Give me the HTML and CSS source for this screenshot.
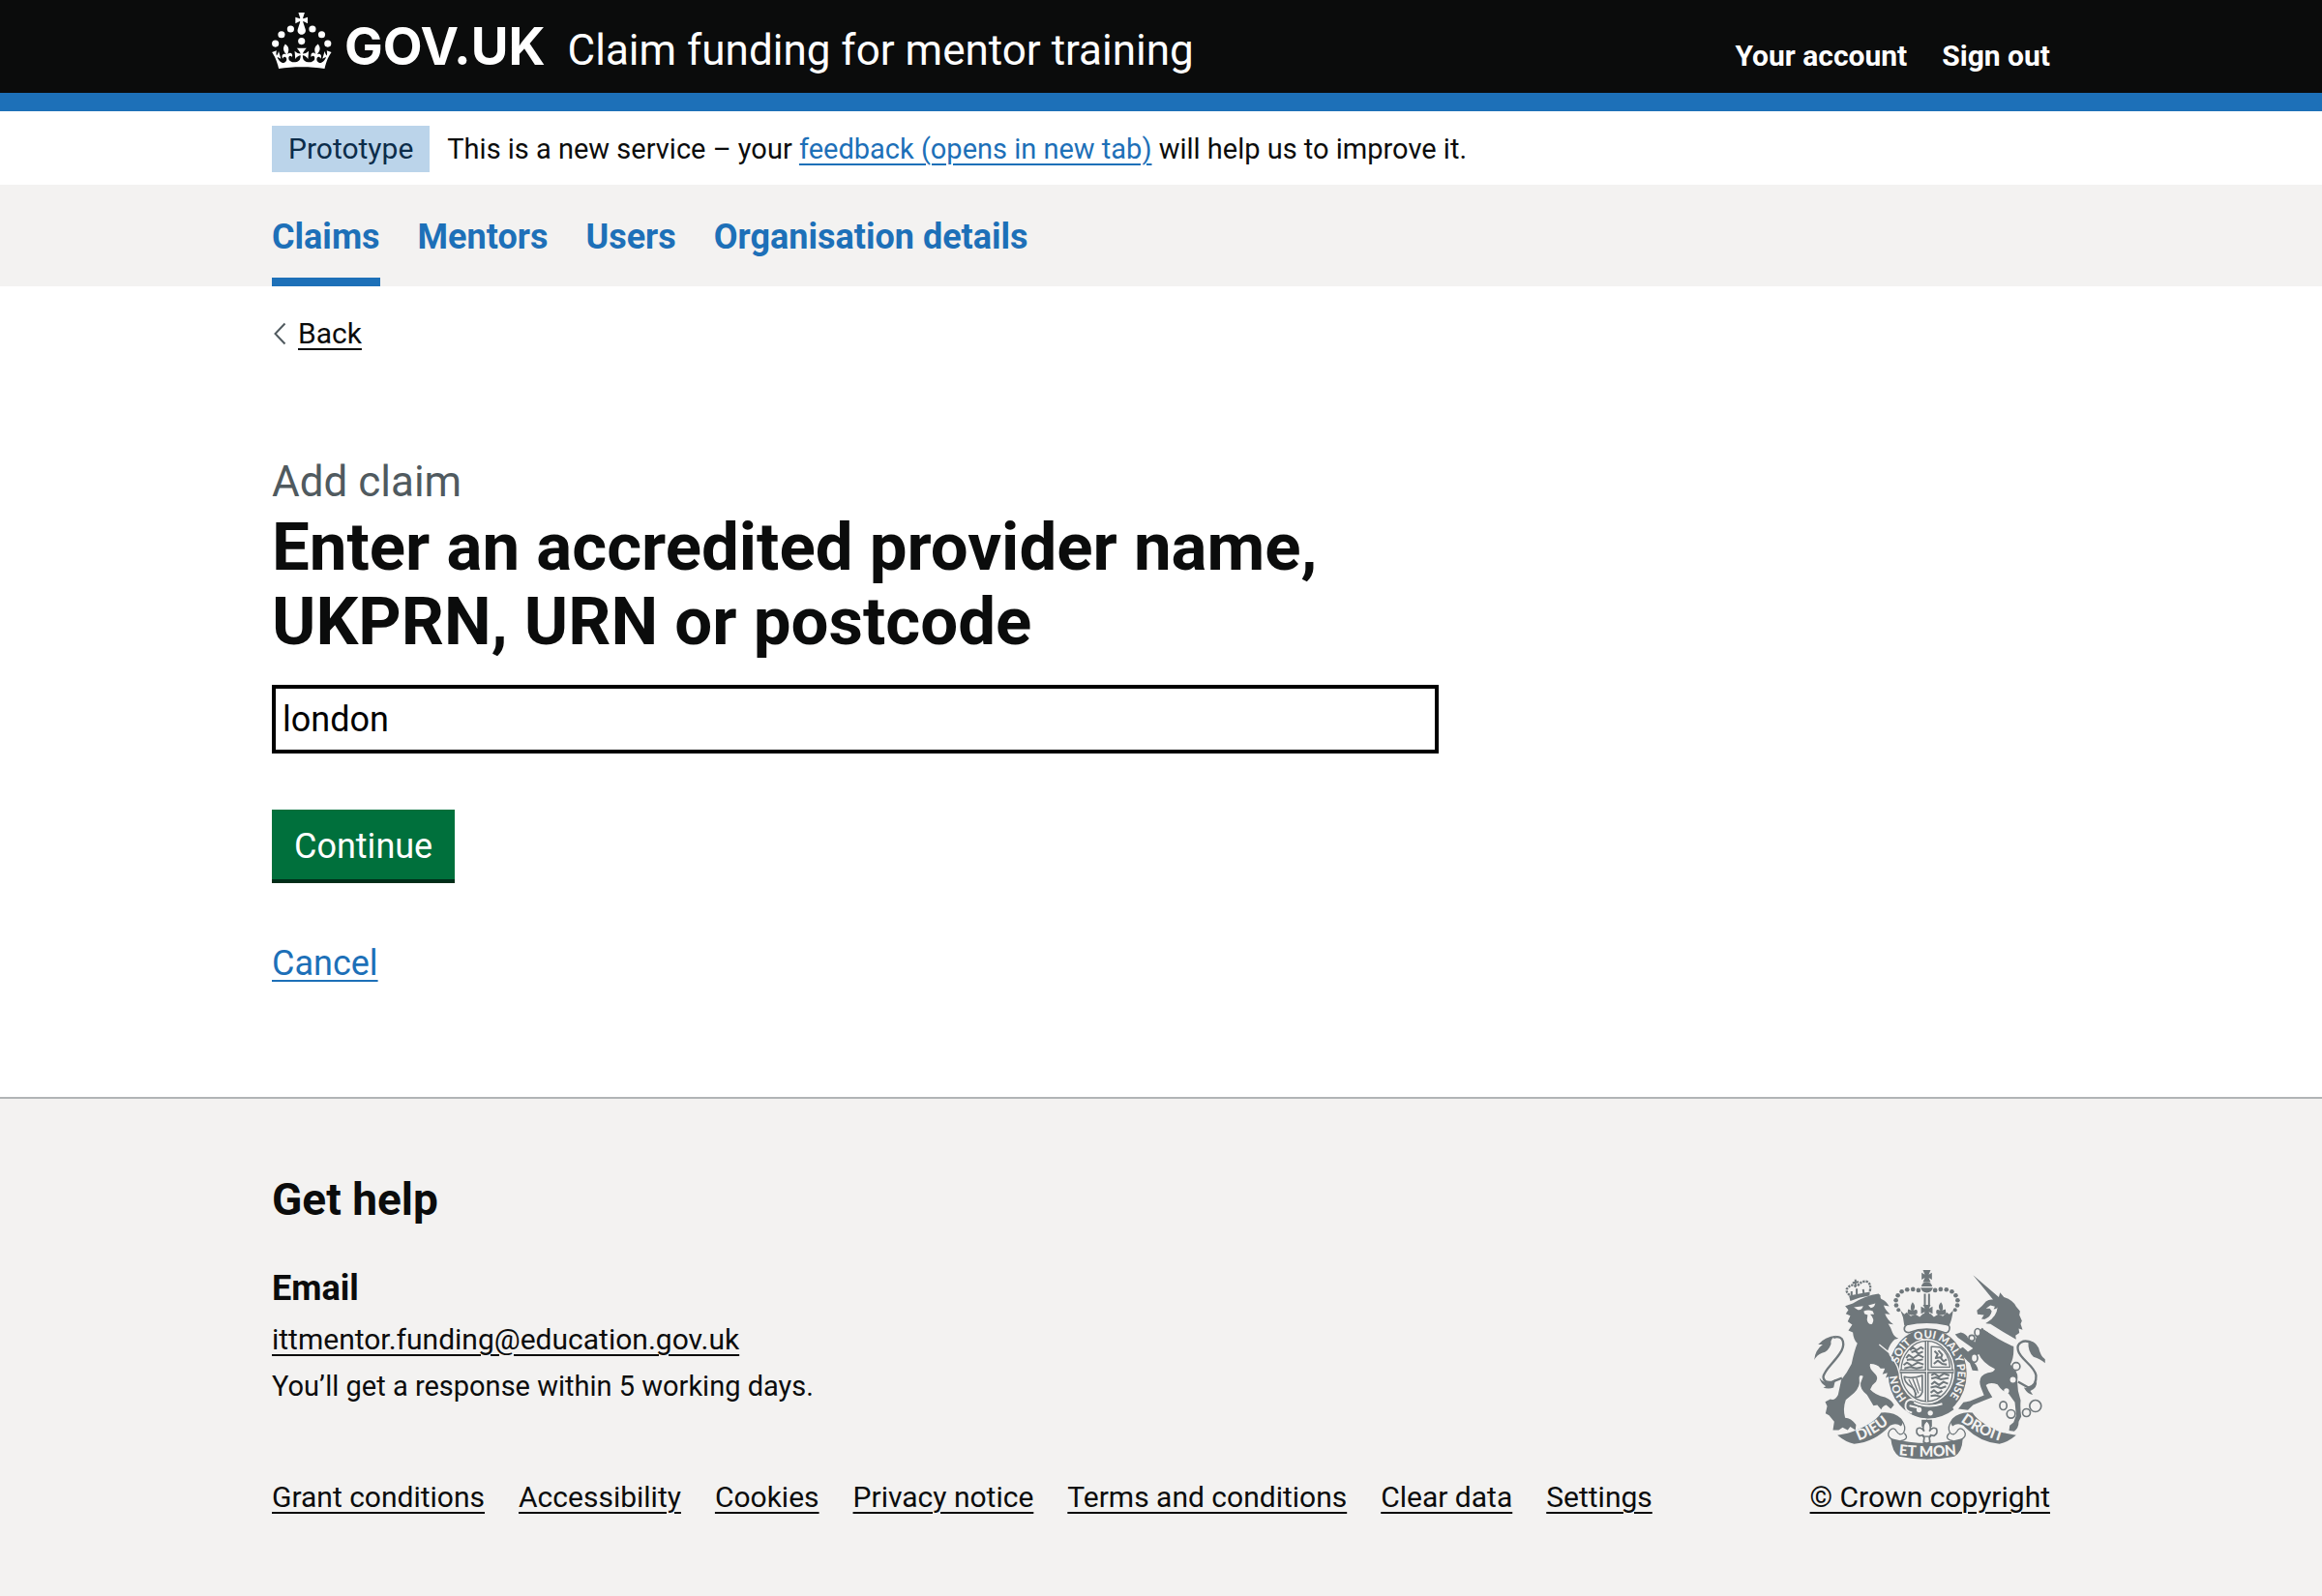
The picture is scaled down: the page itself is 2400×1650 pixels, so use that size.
FILE: index.html
```html
<!DOCTYPE html>
<html lang="en">
<head>
  <meta charset="utf-8">
  <meta name="viewport" content="width=device-width, initial-scale=1">
  <title>Enter an accredited provider - Claim funding for mentor training</title>
  <link rel="stylesheet" href="styles.css">
</head>
<body>
  <header class="header">
    <div class="container header-inner">
      <a class="logo" href="#">
        <svg class="logo-crown" viewBox="0 0 64 60" aria-hidden="true" fill="currentColor">
          <circle cx="20" cy="17.6" r="3.7"/>
          <circle cx="10.2" cy="23.5" r="3.7"/>
          <circle cx="3.7" cy="33.2" r="3.7"/>
          <circle cx="31.7" cy="30.6" r="3.7"/>
          <circle cx="43.3" cy="17.6" r="3.7"/>
          <circle cx="53.2" cy="23.5" r="3.7"/>
          <circle cx="59.7" cy="33.2" r="3.7"/>
          <path d="M33.1,9.8c.2-.1.3-.3.5-.5l4.6,2.4v-6.8l-4.6,1.5c-.1-.2-.3-.3-.5-.5l1.9-5.9h-6.7l1.9,5.9c-.2.1-.3.3-.5.5l-4.6-1.5v6.8l4.6-2.4c.1.2.3.3.5.5l-2.6,8c-.9,2.8,1.2,5.7,4.1,5.7h0c3,0,5.1-2.9,4.1-5.7l-2.6-8ZM37,37.9s-3.4,3.8-4.1,6.1c2.2,0,4.2-.5,6.4-2.8l-.7,8.5c-2-2.8-4.4-4.1-5.7-3.8.1,3.1.5,6.7,5.8,7.2,3.7.3,6.7-1.5,7-3.8.4-2.6-2-4.3-3.7-1.6-1.4-4.5,2.4-6.1,4.9-3.2-1.9-4.5-1.8-7.7,2.4-10.9,3,4,2.6,7.3-1.2,11.1,2.4-1.3,6.2,0,4,4.6-1.2-2.8-3.7-2.2-4.2.2-.3,1.7.7,3.7,3,4.2,1.9.3,4.7-.9,7-5.9-1.3,0-2.4.7-3.9,1.7l2.4-8c.6,2.3,1.4,3.7,2.2,4.5.6-1.6.5-2.8,0-5.3l5,1.8c-2.6,3.6-5.2,8.7-7.3,17.5-7.4-1.1-15.7-1.7-24.5-1.7h0c-8.8,0-17.1.6-24.5,1.7-2.1-8.9-4.7-13.9-7.3-17.5l5-1.8c-.5,2.5-.6,3.7,0,5.3.8-.8,1.6-2.3,2.2-4.5l2.4,8c-1.5-1-2.6-1.7-3.9-1.7,2.3,5,5.2,6.2,7,5.9,2.3-.4,3.3-2.4,3-4.2-.5-2.4-3-3.1-4.2-.2-2.2-4.6,1.6-6,4-4.6-3.7-3.7-4.2-7.1-1.2-11.1,4.2,3.2,4.3,6.4,2.4,10.9,2.5-2.8,6.3-1.3,4.9,3.2-1.8-2.7-4.1-1-3.7,1.6.3,2.3,3.3,4.1,7,3.8,5.4-.5,5.7-4.2,5.8-7.2-1.3-.2-3.7,1-5.7,3.8l-.7-8.5c2.2,2.3,4.2,2.7,6.4,2.8-.7-2.3-4.1-6.1-4.1-6.1h10.6Z"/>
        </svg>
        <span class="logo-word">GOV.UK</span>
      </a>
      <a class="service-name" href="#">Claim funding for mentor training</a>
      <nav class="account-nav" aria-label="Account">
        <a href="#">Your account</a>
        <a href="#">Sign out</a>
      </nav>
    </div>
  </header>

  <div class="container phase-banner">
    <strong class="tag">Prototype</strong>
    <span>This is a new service – your <a class="link" href="#">feedback (opens in new tab)</a> will help us to improve it.</span>
  </div>

  <nav class="primary-nav" aria-label="Primary">
    <ul class="container primary-nav-list">
      <li><a class="primary-nav-link current" href="#" aria-current="page">Claims</a></li>
      <li><a class="primary-nav-link" href="#">Mentors</a></li>
      <li><a class="primary-nav-link" href="#">Users</a></li>
      <li><a class="primary-nav-link" href="#">Organisation details</a></li>
    </ul>
  </nav>

  <div class="container main-wrapper">
    <div class="back">
      <svg class="back-arrow" viewBox="0 0 14 24" aria-hidden="true"><path d="M12.500 1.500 2.500 12l10 10.500" fill="none" stroke="#505a5f" stroke-width="2"/></svg>
      <a class="back-link" href="#">Back</a>
    </div>
    <main>
      <form class="claim-form">
        <span class="caption">Add claim</span>
        <h1 class="heading"><label for="provider">Enter an accredited provider name, UKPRN, URN or postcode</label></h1>
        <input class="text-input" id="provider" name="provider" type="text" value="london">
        <button class="button" type="submit">Continue</button>
        <a class="link cancel" href="#">Cancel</a>
      </form>
    </main>
  </div>

  <footer class="footer">
    <div class="container footer-inner">
      <div class="footer-main">
        <h2 class="footer-heading">Get help</h2>
        <h3 class="footer-subheading">Email</h3>
        <p><a class="footer-link" href="mailto:ittmentor.funding@education.gov.uk">ittmentor.funding@education.gov.uk</a></p>
        <p class="footer-text">You’ll get a response within 5 working days.</p>
        <ul class="footer-links">
          <li><a class="footer-link" href="#">Grant conditions</a></li>
          <li><a class="footer-link" href="#">Accessibility</a></li>
          <li><a class="footer-link" href="#">Cookies</a></li>
          <li><a class="footer-link" href="#">Privacy notice</a></li>
          <li><a class="footer-link" href="#">Terms and conditions</a></li>
          <li><a class="footer-link" href="#">Clear data</a></li>
          <li><a class="footer-link" href="#">Settings</a></li>
        </ul>
      </div>
      <div class="footer-crest">
        <svg class="arms" viewBox="72 68 718 590" aria-hidden="true">
          <defs>
            <path id="garter-line" d="M424 496A94 108 0 0 1 424 280A94 108 0 0 1 424 496"/>
            <path id="dieu-line" d="M203 601Q258 584 310 540"/>
            <path id="mon-line" d="M326 643Q424 654 524 642"/>
            <path id="droit-line" d="M526 538Q584 582 656 602"/>
          </defs>

          <!-- lion -->
          <g class="ink">
            <path d="M168 180L192 172Q230 148 272 142L278 147Q276 157 284 160Q295 165 305 181L288 178Q292 192 308 206L292 204Q298 222 318 237L302 235Q312 250 315 262Q320 275 334 281L322 284Q308 296 300 320L306 330Q322 348 328 370L340 385L336 400L330 413Q322 402 316 412L306 398L294 404L300 388L284 392L292 374L278 374Q268 360 246 360Q240 372 262 392Q272 402 264 416Q252 424 246 440Q262 458 292 464Q312 472 320 488L310 500L296 488Q286 490 280 502L268 488L256 490L236 456Q214 440 216 420L224 398Q210 392 212 408Q216 430 196 450L170 472Q160 500 168 528Q186 528 202 550L200 566L184 556L176 566L160 558L148 566L130 566L134 540L118 520L107 514L112 492L106 478L122 470Q136 476 146 456L156 410Q174 388 188 360Q196 320 206 296Q194 286 192 262L178 256L190 238L176 228L184 210L170 204L178 192Z"/>
            <path d="M72 348Q74 318 98 300L84 300Q104 276 140 272Q120 284 124 298Q116 322 96 326Q80 332 72 348Z"/>
            <path d="M88 404Q100 420 120 418L138 408L132 434Q116 440 100 434L108 430Q92 422 88 404Z"/>
            <path d="M132 278C166 268 170 302 150 330C128 362 104 378 100 400Q100 420 128 416L158 404" fill="none" class="ink-line" stroke-width="7"/>
            <g>
              <path d="M180 148L245 136L244 148Q214 152 184 164Z"/>
              <path d="M182 146Q166 132 176 124Q188 108 202 120M245 134Q250 110 236 104Q220 100 206 118" fill="none" class="ink-line" stroke-width="7" stroke-dasharray="7 3"/>
              <path d="M200 97V120M191 108L210 105M204 144V126M188 146V134M226 142L224 128" fill="none" class="ink-line" stroke-width="6"/>
            </g>
          </g>
          <g class="paper">
            <path d="M195 184L224 180Q220 194 208 192ZM240 178L262 172Q258 186 248 186Z"/>
            <path d="M226 196Q240 190 254 196L258 206L246 206Q262 222 252 236Q238 238 236 222L238 208L228 204Z"/>
          </g>
          <path d="M274 300L306 326L320 356" fill="none" class="paper-line" stroke-width="4"/>

          <!-- garter and shield -->
          <ellipse class="ink" cx="424" cy="390" rx="122" ry="139"/>
          <path class="ink" d="M280 345L312 350Q326 372 340 384L332 412L318 404L304 400Z"/>
          <path d="M306 330Q340 370 338 408" fill="none" class="paper-line" stroke-width="4"/>
          <ellipse class="paper" cx="422" cy="383" rx="87" ry="101"/>
          <ellipse cx="422" cy="383" rx="80" ry="94" fill="none" class="ink-line" stroke-width="4"/>
          <path d="M422 288V478M338 383H506" fill="none" class="ink-line" stroke-width="12"/>
          <path d="M422 290V478M340 383H504" fill="none" class="paper-line" stroke-width="3"/>
          <g fill="none" class="ink-line" stroke-width="6" stroke-linejoin="round">
            <path d="M370 318L378 308L390 318L404 308L412 314M374 324L386 320L396 328L410 322M358 342L366 332L380 342L396 332L412 340M360 348L374 346L390 350L410 346M350 364L360 356L376 366L394 356L412 362M352 374L370 370L390 374L410 370"/>
            <path d="M436 396L446 390L460 400L476 390L492 396M436 406L450 402L466 408L490 404M436 424L446 416L460 426L474 416L488 422M434 434L450 430L466 436L482 430M434 450L444 442L456 452L470 444M434 460L448 458L466 462"/>
            <path d="M436 306V370H494Q492 328 462 308Z" stroke-width="4"/>
            <path d="M446 320L456 330L450 342L464 340L474 352L484 346M444 360L456 350L470 360L484 362M458 318L470 332L466 342" stroke-width="6"/>
            <path d="M352 400Q376 408 408 396V448Q402 466 386 464Q390 440 372 430Q352 418 352 400Z" stroke-width="5"/>
            <path d="M366 408L390 456M378 406L396 452M390 404L402 444" stroke-width="4"/>
          </g>
          <g class="garter-text">
            <text><textPath href="#garter-line" startOffset="112">HON</textPath></text>
            <text><textPath href="#garter-line" startOffset="226">SOIT</textPath></text>
            <text><textPath href="#garter-line" startOffset="310">QUI</textPath></text>
            <text><textPath href="#garter-line" startOffset="386">MAL</textPath></text>
            <text><textPath href="#garter-line" startOffset="434">Y</textPath></text>
            <text><textPath href="#garter-line" startOffset="502">PENSE</textPath></text>
          </g>
          <path class="ink" d="M358 478Q424 506 494 480L506 502Q470 530 424 530Q380 526 352 500Z"/>
          <path d="M384 474Q360 466 356 486Q352 508 376 512M368 490L394 496M382 480Q424 500 470 484" fill="none" class="paper-line" stroke-width="6"/>
          <g class="paper"><circle cx="398" cy="503" r="8"/><circle cx="433" cy="513" r="8"/></g>

          <!-- royal crown -->
          <g class="ink">
            <path d="M410 68H434L428 82L438 76V98L428 92L434 106H410L416 92L406 98V76L416 82Z"/>
            <path d="M405 119Q408 106 422 106Q436 106 439 119Z"/>
            <path d="M403 123H441Q438 138 422 139Q406 138 403 123Z"/>
            <path d="M416 142V176M429 142V176" fill="none" class="ink-line" stroke-width="6"/>
            <path d="M410 176H434L429 188L440 182V204L428 198L434 212H410L416 198L404 204V182L416 188Z"/>
            <path d="M378 168Q390 182 380 194Q396 186 392 204L382 208H374Q358 208 364 190L374 194Q368 180 378 168ZM466 168Q454 182 464 194Q448 186 452 204L462 208H470Q486 208 480 190L470 194Q476 180 466 168Z"/>
            <path d="M340 194L352 206L360 200L372 212L386 206L400 214L410 204H434L444 214L458 206L472 212L484 200L492 206L504 194Q500 224 492 240Q422 226 352 240Q350 214 340 194Z"/>
            <g>
              <circle cx="396" cy="131" r="7"/><circle cx="379" cy="128" r="7"/><circle cx="361" cy="129" r="7"/><circle cx="344" cy="135" r="7"/><circle cx="332" cy="147" r="7"/><circle cx="326" cy="162" r="7"/><circle cx="327" cy="178" r="7"/><circle cx="334" cy="192" r="6"/>
              <circle cx="448" cy="131" r="7"/><circle cx="465" cy="128" r="7"/><circle cx="483" cy="129" r="7"/><circle cx="500" cy="135" r="7"/><circle cx="512" cy="147" r="7"/><circle cx="518" cy="162" r="7"/><circle cx="517" cy="178" r="7"/><circle cx="510" cy="192" r="6"/>
            </g>
          </g>
          <path class="crown-cap" d="M360 238Q422 224 484 238Q496 240 492 254Q488 266 476 262Q422 242 368 262Q354 264 352 252Q352 242 360 238Z"/>

          <!-- unicorn -->
          <g class="ink">
            <path d="M566 84L632 140L646 152L650 138L662 152Q692 162 700 182L712 196L710 208L718 226L714 236L720 254L708 250L710 264L698 272L700 284Q660 262 620 236L606 234L610 222L592 220L600 208L580 206L578 194Q594 182 606 166Q616 158 628 160Z"/>
            <path d="M594 248Q640 284 692 306Q694 340 682 362Q708 384 704 408Q702 440 714 474Q712 500 716 524L708 540Q708 560 694 570L678 568L680 552L692 542L700 520L696 480L676 452Q656 446 642 424Q618 416 606 426Q612 442 626 464Q600 474 566 488L550 504L520 500L536 480L556 476L600 458L590 432Q578 398 612 388Q632 386 634 376Q596 358 584 330Q560 342 562 352Q580 362 582 382L564 380L556 358Q530 334 520 316L534 308L550 322L566 312L532 288Q518 280 510 268L528 262Q548 268 550 280L572 292Q578 262 594 248Z"/>
            <path d="M738 290Q756 286 770 310Q776 336 790 346V358Q776 344 754 338Q736 322 738 290Z"/>
            <path d="M724 434Q748 440 764 414Q766 436 744 444L752 456Q736 456 724 434Z"/>
            <path d="M752 296C722 280 700 296 706 318C712 346 758 366 762 396Q764 428 738 434L706 416" fill="none" class="ink-line" stroke-width="7"/>
          </g>
          <g class="paper">
            <path d="M606 188L620 178L634 182L630 190Q640 190 642 184Q640 214 608 232L600 222Q622 214 624 196L618 188Z"/>
            <path d="M606 236L614 254L622 242L632 264L640 252L650 276L658 262L668 286L676 274L684 294L700 284L688 304L598 252Z"/>
            <circle cx="670" cy="444" r="8"/><circle cx="690" cy="410" r="9"/>
          </g>
          <g class="chain">
            <ellipse cx="580" cy="262" rx="9" ry="12"/><circle cx="562" cy="280" r="9"/><ellipse cx="570" cy="342" rx="10" ry="13"/><circle cx="700" cy="368" r="12"/><ellipse cx="660" cy="490" rx="11" ry="13"/><circle cx="684" cy="516" r="13"/><circle cx="732" cy="512" r="12"/><circle cx="760" cy="491" r="18"/>
          </g>

          <!-- pendant -->
          <path class="ink" d="M406 534H438V556H406Z"/>
          <path class="crown-cap" d="M422 536Q440 554 430 570Q440 554 452 562Q458 576 444 584L434 582L430 590L432 604L422 608L412 604L414 590L410 582L400 584Q386 576 392 562Q404 554 414 570Q404 554 422 536Z"/>
          <path d="M408 586H436" fill="none" class="ink-line" stroke-width="4"/>

          <!-- motto scroll -->
          <g class="ink">
            <path d="M144 582L176 576Q256 550 280 512Q318 508 342 530Q352 542 342 554Q326 542 308 552Q260 604 196 609Q170 604 144 582Z"/>
            <path d="M700 582L668 576Q588 550 564 512Q526 508 502 530Q492 542 502 554Q518 542 536 552Q584 604 648 609Q674 604 700 582Z"/>
            <path d="M310 592Q424 622 534 592Q532 636 508 648Q424 666 336 648Q314 634 310 592Z"/>
          </g>
          <path d="M342 534Q360 556 350 574Q338 586 328 570Q320 554 306 568Q294 586 318 598M502 534Q484 556 494 574Q506 586 516 570Q524 554 538 568Q550 586 526 598M352 576Q370 594 340 600M492 576Q474 594 504 600" fill="none" class="ink-line" stroke-width="4"/>
          <g class="motto-text">
            <text><textPath href="#dieu-line" startOffset="50%">DIEU</textPath></text>
            <text><textPath href="#mon-line" startOffset="50%">ET MON</textPath></text>
            <text><textPath href="#droit-line" startOffset="50%">DROIT</textPath></text>
          </g>
        </svg>
        <a class="footer-link" href="#">© Crown copyright</a>
      </div>
    </div>
  </footer>
</body>
</html>
```
FILE: styles.css
```css
:root {
  --black: #0b0c0c;
  --blue: #1d70b8;
  --grey: #f3f2f1;
  --crest: #6f777b;
}

*,
*::before,
*::after {
  box-sizing: border-box;
}

body {
  margin: 0;
  min-height: 100vh;
  display: flex;
  flex-direction: column;
  background: #fff;
  color: var(--black);
  font-family: Roboto, "Liberation Sans", sans-serif;
  font-size: 30px;
  line-height: 48px;
}

h1,
h2,
h3,
p,
ul {
  margin: 0;
  padding: 0;
}

ul {
  list-style: none;
}

.container {
  width: 100%;
  max-width: 1838px;
  margin: 0 auto;
}

.link,
.back-link,
.footer-link {
  text-decoration: underline;
  text-decoration-thickness: 2px;
  text-underline-offset: 5px;
}

.link {
  color: var(--blue);
}

/* Header */

.header {
  background: var(--black);
  border-bottom: 19px solid var(--blue);
}

.header-inner {
  display: flex;
  align-items: flex-start;
  padding: 13px 0 3px;
  line-height: 70px;
}

.header a {
  color: #fff;
  text-decoration: none;
}

.logo {
  display: flex;
  align-items: flex-start;
  gap: 13px;
}

.logo-crown {
  width: 62px;
  height: 58px;
}

.logo-word {
  font-family: Inter, Roboto, sans-serif;
  font-size: 53px;
  font-weight: 700;
}

.service-name {
  margin-left: 23px;
  padding-top: 4px;
  font-size: 44px;
}

.account-nav {
  display: flex;
  gap: 36px;
  margin-left: auto;
  padding-top: 10px;
  font-weight: 700;
}

/* Phase banner */

.phase-banner {
  display: flex;
  gap: 18px;
  padding: 15px 0 13px;
  font-size: 29px;
}

.tag {
  padding: 0 17px;
  background: #bbd4ea;
  color: #0c2d4a;
  font-size: 30px;
  font-weight: 400;
}

/* Primary navigation */

.primary-nav {
  background: var(--grey);
}

.primary-nav-list {
  display: flex;
  gap: 39px;
}

.primary-nav-link {
  display: block;
  padding: 30px 0 18px;
  border-bottom: 9px solid transparent;
  color: var(--blue);
  font-size: 36px;
  font-weight: 700;
  text-decoration: none;
}

.primary-nav-link.current {
  border-bottom-color: var(--blue);
}

/* Main content */

.main-wrapper {
  padding: 31px 0 114px;
}

.back {
  display: flex;
  align-items: center;
  gap: 12px;
  margin-bottom: 107px;
  padding-left: 1px;
  line-height: 36px;
}

.back-arrow {
  width: 14px;
  height: 24px;
}

.back-link {
  color: var(--black);
}

.claim-form {
  display: flex;
  flex-direction: column;
  align-items: flex-start;
  max-width: 1206px;
}

.caption {
  color: #505a5f;
  font-size: 44px;
  line-height: 57px;
}

.heading {
  font-size: 69px;
  font-weight: 700;
  line-height: 77px;
}

.text-input {
  width: 100%;
  height: 71px;
  margin-top: 27px;
  padding: 0 7px;
  border: 4px solid #000;
  border-radius: 0;
  background: #fff;
  color: #000;
  font: inherit;
  font-size: 36px;
}

.button {
  margin-top: 58px;
  padding: 15px 23px 11px;
  border: 0;
  border-radius: 0;
  background: #00703c;
  box-shadow: 0 4px 0 #002d18;
  color: #fff;
  font: inherit;
  font-size: 36px;
  line-height: 46px;
}

.cancel {
  margin-top: 63px;
  font-size: 36px;
}

/* Footer */

.footer {
  flex-grow: 1;
  border-top: 2px solid #b1b4b6;
  background: var(--grey);
}

.footer-inner {
  display: flex;
  justify-content: space-between;
  align-items: flex-end;
  padding: 75px 0 60px;
}

.footer-heading {
  margin-bottom: 39px;
  font-size: 46px;
  line-height: 58px;
}

.footer-subheading {
  margin-bottom: 5px;
  font-size: 36px;
}

.footer-text {
  font-size: 29px;
}

.footer-link {
  color: var(--black);
}

.footer-links {
  display: flex;
  gap: 35px;
  margin-top: 67px;
}

.footer-crest {
  display: flex;
  flex-direction: column;
  align-items: center;
  gap: 15px;
}

.arms {
  width: 239px;
  height: 196px;
}

.ink {
  fill: var(--crest);
}

.ink-line {
  stroke: var(--crest);
}

.paper {
  fill: var(--grey);
}

.paper-line {
  stroke: var(--grey);
}

.crown-cap,
.chain {
  fill: var(--grey);
  stroke: var(--crest);
  stroke-width: 5px;
}

.garter-text,
.motto-text {
  fill: var(--grey);
  font-family: Lato, sans-serif;
  font-weight: 900;
  text-anchor: middle;
}

.garter-text {
  font-size: 34px;
}

.motto-text {
  font-size: 46px;
}
```
